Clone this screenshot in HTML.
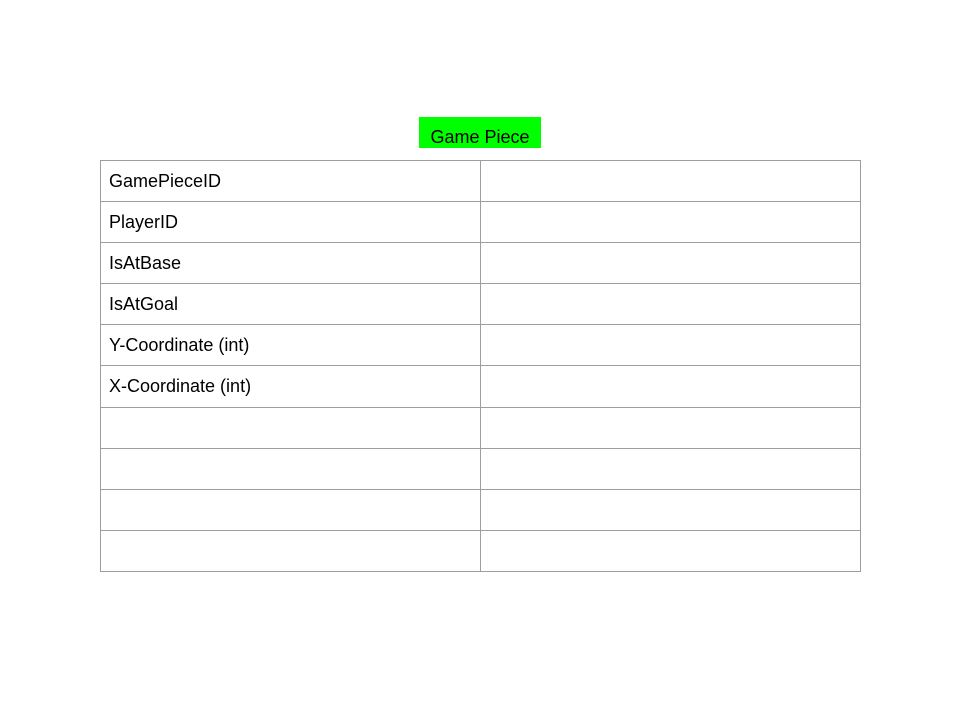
<!DOCTYPE html>
<html><head><style>
html,body{margin:0;padding:0;width:960px;height:720px;background:#fff;overflow:hidden;font-family:"Liberation Sans",Arial,sans-serif;}
.title{position:absolute;left:419px;top:117px;width:122px;height:31px;background:#00ff00;color:#000;font-size:18px;line-height:31px;text-align:center;padding-top:5px;box-sizing:border-box;}
table{position:absolute;left:100px;top:160px;border-collapse:collapse;}
td{border:1px solid #9e9e9e;width:380px;height:40px;padding:0 0 0 8px;box-sizing:border-box;font-size:18px;color:#000;vertical-align:middle;}
</style></head><body>
<div class="title">Game Piece</div>
<table>
<tr style="height:41px"><td>GamePieceID</td><td></td></tr>
<tr style="height:41px"><td>PlayerID</td><td></td></tr>
<tr style="height:41px"><td>IsAtBase</td><td></td></tr>
<tr style="height:41px"><td>IsAtGoal</td><td></td></tr>
<tr style="height:41px"><td>Y-Coordinate (int)</td><td></td></tr>
<tr style="height:42px"><td>X-Coordinate (int)</td><td></td></tr>
<tr style="height:41px"><td></td><td></td></tr>
<tr style="height:41px"><td></td><td></td></tr>
<tr style="height:41px"><td></td><td></td></tr>
<tr style="height:41px"><td></td><td></td></tr>
</table>
</body></html>
